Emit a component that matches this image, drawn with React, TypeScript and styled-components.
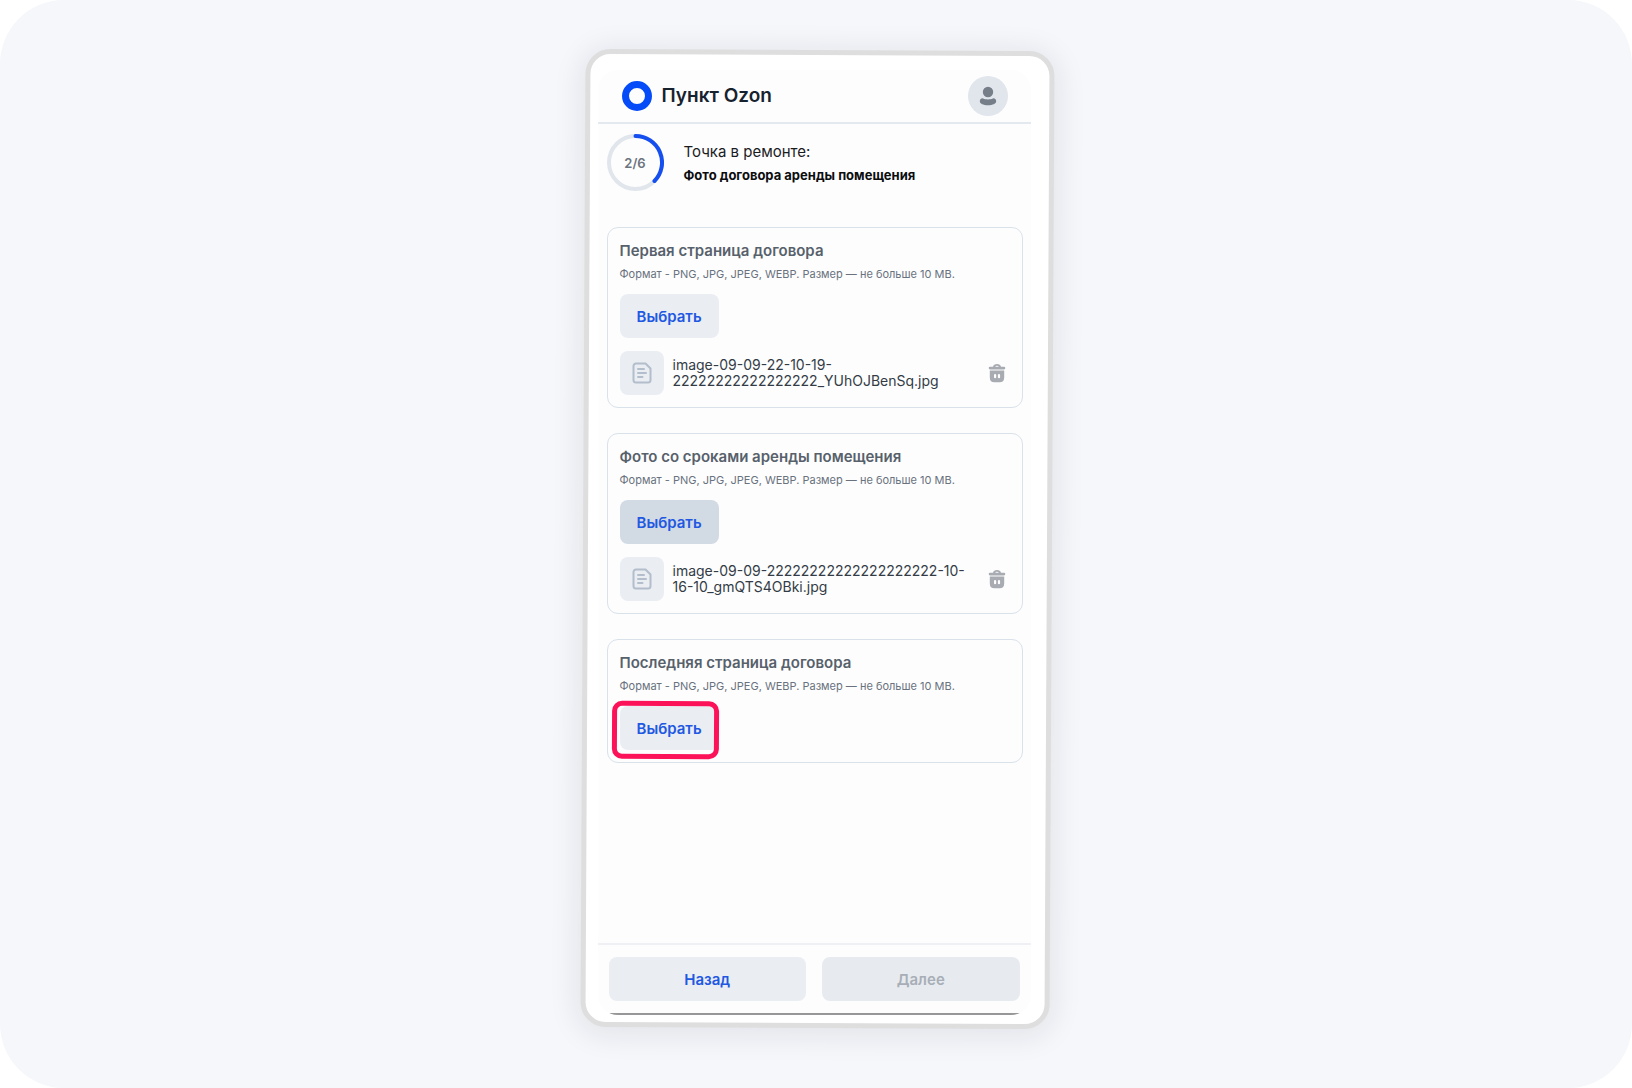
import React from 'react';
import styled, { createGlobalStyle } from 'styled-components';

const GlobalStyle = createGlobalStyle`
  *, *::before, *::after { box-sizing: border-box; }
  body { margin: 0; background: #fff; font-optical-sizing: none; }
  body, button { font-family: Inter, "Noto Sans", sans-serif; }
  h1, h2, p { margin: 0; padding: 0; }
`;

const Stage = styled.div`
  display: flex;
  justify-content: center;
  min-height: 100vh;
  padding: 50px 20px 60px 22px;
  border-radius: 64px;
  background: #f5f7fb;
`;

const Device = styled.div`
  position: relative;
  isolation: isolate;
  display: flex;
  width: 100%;
  max-width: 469px;
  padding: 20px 21px 13px 15px;

  &::before {
    content: '';
    position: absolute;
    inset: 0;
    z-index: -1;
    border: 5px solid #dedede;
    border-radius: 25px;
    background: #fff;
    box-shadow: 0 4px 28px 6px rgba(20, 24, 40, 0.08);
    transform: rotate(0.3deg);
  }
`;

const Screen = styled.div`
  display: flex;
  flex: 1;
  flex-direction: column;
  min-width: 0;
  overflow: hidden;
  border-radius: 20px;
  background: #fdfdfe;
`;

const Header = styled.header`
  display: flex;
  align-items: center;
  justify-content: space-between;
  padding: 6px 23px 6px 24px;
  border-bottom: 2px solid #e4e9f0;
`;

const Brand = styled.div`
  display: flex;
  align-items: center;
  gap: 10px;
`;

const BrandName = styled.h1`
  color: #16232f;
  font-size: 19px;
  font-weight: 600;
  line-height: 28px;
`;

const Avatar = styled.button`
  display: grid;
  place-items: center;
  width: 40px;
  height: 40px;
  padding: 0;
  border: 0;
  border-radius: 50%;
  background: #e1e6ed;
`;

const Main = styled.main`
  flex: 1;
  padding: 10px 8px 24px 9px;
`;

const Progress = styled.section`
  display: flex;
  align-items: center;
  gap: 20px;
`;

const Ring = styled.div`
  display: grid;
  width: 57px;
  height: 57px;

  > * {
    grid-area: 1 / 1;
    place-self: center;
  }
`;

const Step = styled.span`
  color: #6d747e;
  font-size: 13px;
  font-weight: 600;
`;

const Status = styled.p`
  color: #1b1c1e;
  font-size: 15px;
  line-height: 24px;
`;

const Topic = styled.h2`
  color: #0c0d0f;
  font-size: 13px;
  font-weight: 700;
  line-height: 22px;
`;

const Cards = styled.div`
  display: flex;
  flex-direction: column;
  gap: 25px;
  margin-top: 36px;
`;

const Card = styled.section`
  padding: 12px;
  border: 1px solid #d9e2ea;
  border-radius: 11px;
`;

const CardTitle = styled.h2`
  margin-bottom: 2px;
  color: #57616b;
  font-size: 15px;
  font-weight: 600;
  line-height: 22px;
`;

const Hint = styled.p`
  color: #69727d;
  font-size: 11px;
  line-height: 20px;
`;

const Button = styled.button<{ $active?: boolean }>`
  height: 44px;
  padding: 0 17px;
  border: 0;
  border-radius: 8px;
  background: ${({ $active }) => ($active ? '#d2dae3' : '#eaedf2')};
  color: #2158e2;
  font-size: 15px;
  font-weight: 600;

  &:disabled {
    background: #e7ebef;
    color: #a8aeb7;
  }
`;

const Picker = styled.div<{ $marked?: boolean }>`
  position: relative;
  width: fit-content;
  margin-top: 10px;

  &::after {
    content: '';
    display: ${({ $marked }) => ($marked ? 'block' : 'none')};
    position: absolute;
    inset: -5px 0 -9px -8px;
    border: 5px solid #fb1259;
    border-radius: 10px;
    pointer-events: none;
    transform: rotate(0.3deg);
  }
`;

const FileRow = styled.div`
  display: flex;
  align-items: center;
  gap: 9px;
  margin-top: 13px;
`;

const FileTile = styled.span`
  display: grid;
  flex: none;
  place-items: center;
  width: 44px;
  height: 44px;
  border-radius: 8px;
  background: #eaedf2;
`;

const FileName = styled.span`
  flex: 1;
  color: #333c45;
  font-size: 14px;
  line-height: 16px;
`;

const IconButton = styled.button`
  display: grid;
  flex: none;
  place-items: center;
  width: 26px;
  height: 26px;
  padding: 0;
  border: 0;
  background: none;
`;

const Footer = styled.footer`
  display: grid;
  grid-template-columns: 1fr 1fr;
  gap: 16px;
  padding: 12px 11px;
  border-top: 2px solid #eef0f3;
  border-bottom: 2px solid #97979a;
`;

function LogoIcon() {
  return (
    <svg width="30" height="30" viewBox="0 0 30 30" fill="none" aria-hidden="true">
      <circle cx="15" cy="15" r="11.5" stroke="#054cf8" strokeWidth="7" />
    </svg>
  );
}

function UserIcon() {
  return (
    <svg width="20" height="20" viewBox="0 0 20 20" fill="#767e89" aria-hidden="true">
      <circle cx="10" cy="6" r="5.2" />
      <path d="M4.5 12.2C7.600 13.800 12.400 13.800 15.500 12.200c1.300 0 2.700 1.300 2.700 3 0 2.400-3.500 4-8.200 4s-8.200-1.600-8.200-4c0-1.700 1.400-3 2.700-3Z" />
    </svg>
  );
}

function RingIcon() {
  return (
    <svg width="57" height="57" viewBox="0 0 57 57" fill="none" strokeWidth="4" aria-hidden="true">
      <circle cx="28.5" cy="28.5" r="26.5" stroke="#e1e6ec" />
      <path d="M28.5 2a26.5 26.5 0 0 1 19 45" stroke="#164ff0" strokeLinecap="round" />
    </svg>
  );
}

function DocumentIcon() {
  return (
    <svg width="20" height="22" viewBox="0 0 20 22" fill="none" stroke="#b3becc" strokeWidth="2" strokeLinecap="round" strokeLinejoin="round" aria-hidden="true">
      <path d="M4 1.5h9.5l5 5V18a2.5 2.5 0 0 1-2.5 2.5H4A2.5 2.5 0 0 1 1.5 18V4A2.5 2.5 0 0 1 4 1.5Z" />
      <path d="M6 7h6M6 11h8M6 15h4.5" />
    </svg>
  );
}

function TrashIcon() {
  return (
    <svg width="18" height="20" viewBox="0 0 18 20" fill="#a9abb2" aria-hidden="true">
      <path d="M5 3.8C5.4 1.8 6.8 1 9 1s3.6.8 4 2.8h3a1.3 1.3 0 0 1 0 2.6H2a1.3 1.3 0 0 1 0-2.6h3Zm2.2 0h3.6c-.3-.7-.9-1-1.8-1s-1.5.3-1.8 1Z" />
      <path fillRule="evenodd" d="M1.8 7.4h14.4v7c0 3.400-1.600 4.800-4.600 4.800H6.400c-3 0-4.600-1.400-4.600-4.800v-7ZM6 12v2.200a1.100 1.100 0 0 0 2.200 0V12A1.100 1.100 0 0 0 6 12Zm3.900 0v2.200a1.100 1.100 0 0 0 2.200 0V12a1.100 1.100 0 0 0-2.200 0Z" />
    </svg>
  );
}

interface Upload {
  title: string;
  file?: string[];
  active?: boolean;
  marked?: boolean;
}

const uploads: Upload[] = [
  { title: 'Первая страница договора', file: ['image-09-09-22-10-19-', '22222222222222222_YUhOJBenSq.jpg'] },
  { title: 'Фото со сроками аренды помещения', file: ['image-09-09-22222222222222222222-10-', '16-10_gmQTS4OBki.jpg'], active: true },
  { title: 'Последняя страница договора', marked: true },
];

function UploadCard({ title, file, active, marked }: Upload) {
  return (
    <Card>
      <CardTitle>{title}</CardTitle>
      <Hint>Формат - PNG, JPG, JPEG, WEBP. Размер — не больше 10 MB.</Hint>
      <Picker $marked={marked}>
        <Button type="button" $active={active}>Выбрать</Button>
      </Picker>
      {file && (
        <FileRow>
          <FileTile><DocumentIcon /></FileTile>
          <FileName>{file[0]}<br />{file[1]}</FileName>
          <IconButton type="button" aria-label="Удалить"><TrashIcon /></IconButton>
        </FileRow>
      )}
    </Card>
  );
}

export default function App() {
  return (
    <>
      <GlobalStyle />
      <Stage>
        <Device>
          <Screen>
            <Header>
              <Brand>
                <LogoIcon />
                <BrandName>Пункт Ozon</BrandName>
              </Brand>
              <Avatar type="button" aria-label="Профиль"><UserIcon /></Avatar>
            </Header>
            <Main>
              <Progress>
                <Ring>
                  <RingIcon />
                  <Step>2/6</Step>
                </Ring>
                <div>
                  <Status>Точка в ремонте:</Status>
                  <Topic>Фото договора аренды помещения</Topic>
                </div>
              </Progress>
              <Cards>
                {uploads.map((upload) => <UploadCard key={upload.title} {...upload} />)}
              </Cards>
            </Main>
            <Footer>
              <Button type="button">Назад</Button>
              <Button type="button" disabled>Далее</Button>
            </Footer>
          </Screen>
        </Device>
      </Stage>
    </>
  );
}
